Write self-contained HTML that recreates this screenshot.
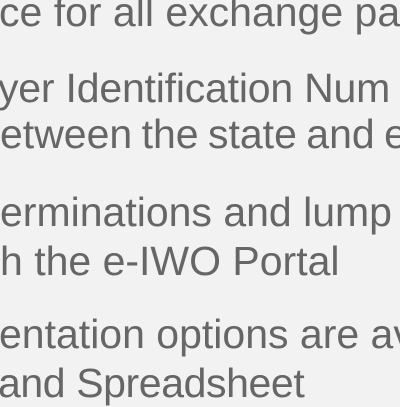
<!DOCTYPE html>
<html><head><style>
html,body{margin:0;padding:0;width:400px;height:400px;overflow:hidden;background:#f2f2f2;}
div{position:absolute;white-space:nowrap;font-family:"Liberation Sans",sans-serif;font-size:41px;line-height:48px;color:#666;}
</style></head><body>
<div style="left:-1px;top:-12px">ce for all exchange pa</div>
<div style="left:-2px;top:64px;letter-spacing:-0.2px">yer Identification Num</div>
<div style="left:0px;top:110px;word-spacing:-2px">etween the state and e</div>
<div style="left:0px;top:188px">erminations and lump</div>
<div style="left:0px;top:237px">h the e-IWO Portal</div>
<div style="left:-1px;top:310px">entation options are av</div>
<div style="left:-2px;top:359px;letter-spacing:-0.4px">and Spreadsheet</div>
</body></html>
